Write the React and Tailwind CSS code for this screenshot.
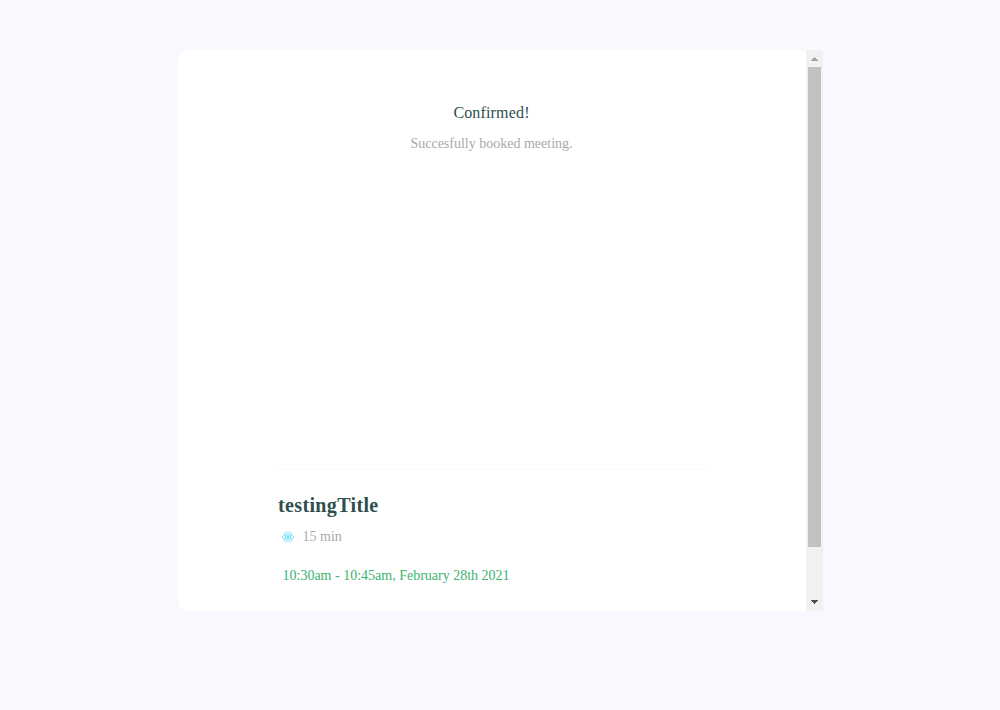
function ReactLogo() {
  return (
    <svg viewBox="-11.5 -10.5 23 21" className="h-3 w-3 shrink-0" fill="none" stroke="#61dafb" strokeWidth="1.2">
      <circle r="2.2" fill="#61dafb" stroke="none" />
      <ellipse rx="11" ry="4.2" />
      <ellipse rx="11" ry="4.2" transform="rotate(60)" />
      <ellipse rx="11" ry="4.2" transform="rotate(120)" />
    </svg>
  );
}

function Scrollbar() {
  return (
    <div className="flex w-[17px] shrink-0 flex-col items-center bg-[#f1f1f1]">
      <svg width="17" height="17" viewBox="0 0 17 17" shapeRendering="crispEdges">
        <path d="M8 7h1v1h1v1h1v1h1v1H5v-1h1V9h1V8h1z" fill="#a3a3a3" />
      </svg>
      <div className="h-[480px] w-[13px] bg-[#c1c1c1]" />
      <div className="flex-1" />
      <svg width="17" height="17" viewBox="0 0 17 17" shapeRendering="crispEdges">
        <path d="M5 6h7v1h-1v1h-1v1H9v1H8V9H7V8H6V7H5z" fill="#505050" />
      </svg>
    </div>
  );
}

export default function App() {
  return (
    <div className="h-[710px] bg-[#f8f8ff] pt-[50px] pl-[178px] font-['Liberation_Serif',serif] text-sm leading-4">
      <div className="flex h-[561px] w-[645px] overflow-hidden rounded-l-[10px] bg-white">
        <main className="flex flex-1 flex-col px-[100px] pt-[54px]">
          <header className="flex h-[365px] flex-col items-center pr-px">
            <h1 className="text-base leading-[18px] tracking-[0.16px] text-[#2f4f4f]">Confirmed!</h1>
            <p className="mt-[14px] text-[#a9a9a9]">Succesfully booked meeting.</p>
          </header>
          <section className="border-t border-[#f8f8f8] pt-6">
            <h2 className="text-xl leading-[23px] font-bold tracking-[0.36px] text-[#2f4f4f]">testingTitle</h2>
            <div className="mt-3 flex items-center gap-[8.5px] pl-1 text-[#a9a9a9]">
              <ReactLogo />
              <span>15 min</span>
            </div>
            <p className="mt-[23px] pl-[4.5px] text-[#3cb371]">10:30am - 10:45am, February 28th 2021</p>
          </section>
        </main>
        <Scrollbar />
      </div>
    </div>
  );
}
